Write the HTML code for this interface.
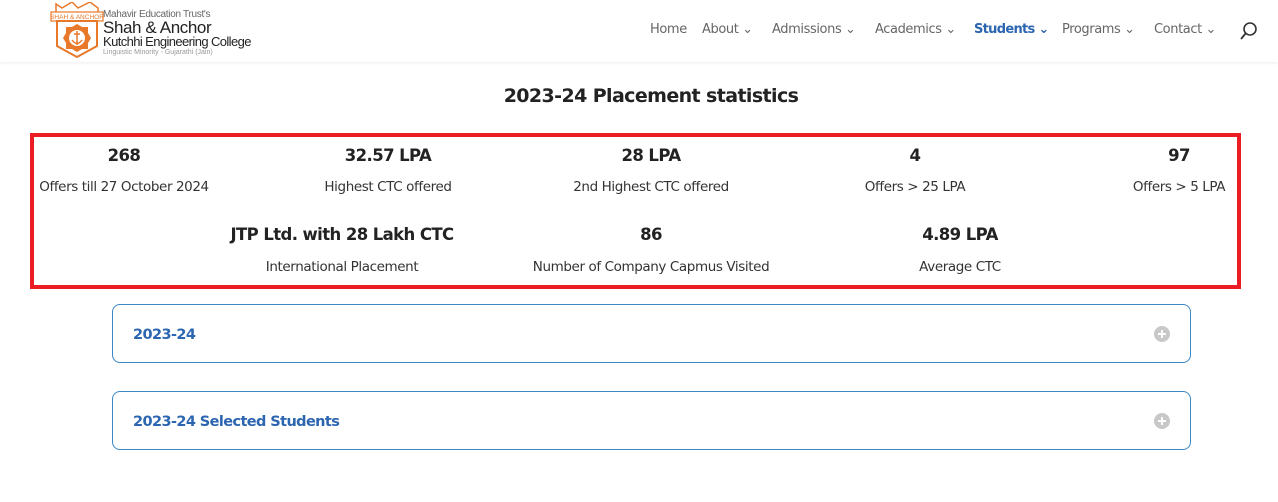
<!DOCTYPE html>
<html><head><meta charset="utf-8"><style>
*{margin:0;padding:0;box-sizing:border-box}
body{width:1278px;height:502px;background:#fff;font-family:"DejaVu Sans","Liberation Sans",sans-serif;color:#333;position:relative;overflow:hidden}
.hdr{position:absolute;left:0;top:0;width:1278px;height:62px;background:#fff;box-shadow:0 1px 3px rgba(0,0,0,.08)}
.nav{position:absolute;top:22px;font-size:13px;color:#666;white-space:nowrap;letter-spacing:-.4px}
.c{position:absolute;text-align:center;white-space:nowrap;transform:translateX(-50%)}
.n{font-size:16.5px;font-weight:bold;color:#222;letter-spacing:-.6px}
.l{font-size:13.5px;color:#333;letter-spacing:-.4px}
.box{position:absolute;left:30px;top:133px;width:1211px;height:156px;border:4px solid #ec1c24}
.acc{position:absolute;left:112px;width:1079px;height:59px;border:1px solid #3b87c4;border-radius:8px}
.acc span{position:absolute;left:20px;top:22px;font-size:14.5px;font-weight:bold;color:#2c65b0;letter-spacing:-.6px}
.plus{position:absolute;right:20px;top:21px;width:16px;height:16px;border-radius:50%;background:#c8c8c8}
.plus:before,.plus:after{content:"";position:absolute;background:#fff;left:4px;top:7px;width:8px;height:2px}
.plus:after{left:7px;top:4px;width:2px;height:8px}
</style></head><body>
<div class="hdr">
<svg style="position:absolute;left:50px;top:2px" width="54" height="56" viewBox="0 0 54 56">
<path d="M6 10 L6 2 L12 6 L22 0 L28 6 L40 0 L48 6 L48 10" fill="none" stroke="#e8782a" stroke-width="1.5"/>
<rect x="1" y="10" width="52" height="9" fill="#fff" stroke="#e8782a" stroke-width="1.2"/>
<text x="27" y="17" font-size="6.5" fill="#e8782a" text-anchor="middle" font-family="Liberation Sans">SHAH &amp; ANCHOR</text>
<path d="M7 19 L47 19 L47 44 L27 55 L7 44 Z" fill="#fff" stroke="#e8782a" stroke-width="2"/>
<path d="M27 22 L32 25 L38 25 L38 31 L41 36 L38 41 L38 47 L32 47 L27 50 L22 47 L16 47 L16 41 L13 36 L16 31 L16 25 L22 25 Z" fill="#e8782a"/>
<circle cx="27" cy="36" r="8" fill="#fff"/>
<path d="M27 29 V43 M22 38 Q27 45 32 38 M24 32 H30" stroke="#e8782a" stroke-width="1.5" fill="none"/>
</svg>
<div style="position:absolute;left:103px;top:9px;font-family:'Liberation Sans';font-size:10px;color:#666;letter-spacing:-.3px">Mahavir Education Trust's</div>
<div style="position:absolute;left:103px;top:19px;font-family:'Liberation Sans';font-size:17px;color:#222;letter-spacing:-.4px;line-height:18px">Shah &amp; Anchor</div>
<div style="position:absolute;left:103px;top:35px;font-family:'Liberation Sans';font-size:13px;color:#222;letter-spacing:-.6px;line-height:14px">Kutchhi Engineering College</div>
<div style="position:absolute;left:103px;top:49px;font-family:'Liberation Sans';font-size:7px;color:#999">Linguistic Minority - Gujarathi (Jain)</div>
<div class="nav" style="left:650px">Home</div>
<div class="nav" style="left:702px">About ⌄</div>
<div class="nav" style="left:772px">Admissions ⌄</div>
<div class="nav" style="left:875px">Academics ⌄</div>
<div class="nav" style="left:974px;color:#2c65b0;font-weight:bold;letter-spacing:-.7px">Students ⌄</div>
<div class="nav" style="left:1062px">Programs ⌄</div>
<div class="nav" style="left:1154px">Contact ⌄</div>
<svg style="position:absolute;left:1239px;top:21px" width="20" height="20" viewBox="0 0 20 20"><circle cx="11" cy="8" r="6" fill="none" stroke="#333" stroke-width="1.6"/><path d="M7 12 L2 18" stroke="#333" stroke-width="1.8"/></svg>
</div>
<div class="c" style="left:651px;top:85px;font-size:19px;font-weight:bold;color:#222;letter-spacing:-.6px">2023-24 Placement statistics</div>
<div class="box"></div>
<div class="c n" style="left:124px;top:146px">268</div>
<div class="c l" style="left:124px;top:179px">Offers till 27 October 2024</div>
<div class="c n" style="left:388px;top:146px">32.57 LPA</div>
<div class="c l" style="left:388px;top:179px">Highest CTC offered</div>
<div class="c n" style="left:651px;top:146px">28 LPA</div>
<div class="c l" style="left:651px;top:179px">2nd Highest CTC offered</div>
<div class="c n" style="left:915px;top:146px">4</div>
<div class="c l" style="left:915px;top:179px">Offers &gt; 25 LPA</div>
<div class="c n" style="left:1179px;top:146px">97</div>
<div class="c l" style="left:1179px;top:179px">Offers &gt; 5 LPA</div>
<div class="c n" style="left:342px;top:225px">JTP Ltd. with 28 Lakh CTC</div>
<div class="c l" style="left:342px;top:259px">International Placement</div>
<div class="c n" style="left:651px;top:225px">86</div>
<div class="c l" style="left:651px;top:259px">Number of Company Capmus Visited</div>
<div class="c n" style="left:960px;top:225px">4.89 LPA</div>
<div class="c l" style="left:960px;top:259px">Average CTC</div>
<div class="acc" style="top:304px"><span>2023-24</span><div class="plus"></div></div>
<div class="acc" style="top:391px"><span>2023-24 Selected Students</span><div class="plus"></div></div>
</body></html>
